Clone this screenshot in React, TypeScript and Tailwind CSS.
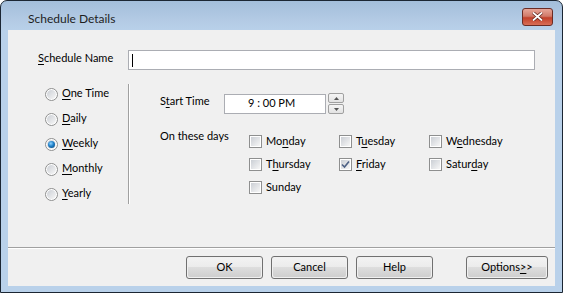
import React from 'react';

const font = "font-['Segoe_UI','Lato','Noto_Sans',sans-serif] text-[11px] text-black";

// Win7-ish radio button glyph
const Radio: React.FC<{ checked?: boolean }> = ({ checked }) => (
  <span className="w-[13px] h-[13px] rounded-full border border-[#8e8f8f] bg-white flex items-center justify-center shrink-0">
    <span className="w-[9px] h-[9px] rounded-full bg-gradient-to-br from-[#cbcfd5] to-[#f7f7f7] flex items-center justify-center">
      {checked && (
        <span className="w-[7px] h-[7px] rounded-full bg-[radial-gradient(circle_at_40%_35%,#8fd3ff_0%,#1f80c8_45%,#0b3f6e_100%)]" />
      )}
    </span>
  </span>
);

const Check: React.FC<{ checked?: boolean }> = ({ checked }) => (
  <span className="w-[13px] h-[13px] border border-[#8e8f8f] bg-white p-[1px] shrink-0 flex">
    <span className="flex-1 bg-gradient-to-br from-[#cbcfd5] to-[#f7f7f7] flex items-center justify-center">
      {checked && (
        <svg width="9" height="9" viewBox="0 0 9 9">
          <path d="M1 4.5 L3.5 7 L8 1.5" stroke="#4d6185" strokeWidth="1.6" fill="none" />
        </svg>
      )}
    </span>
  </span>
);

// label with one underlined access key
const AK: React.FC<{ text: string; at?: number }> = ({ text, at }) => {
  if (at === undefined) return <>{text}</>;
  return (
    <>
      {text.slice(0, at)}
      <span className="underline underline-offset-2">{text[at]}</span>
      {text.slice(at + 1)}
    </>
  );
};

const Btn: React.FC<{ children: React.ReactNode; w?: string }> = ({ children, w = 'w-[77px]' }) => (
  <div className={`${w} h-[23px] rounded-[3px] border border-[#707070] p-px`}>
    <div className="w-full h-full rounded-[2px] bg-[linear-gradient(#f2f2f2_0%,#ebebeb_50%,#dddddd_50%,#cfcfcf_100%)] flex items-center justify-center">
      {children}
    </div>
  </div>
);

const days: [string, number | undefined, boolean][] = [
  ['Monday', 2, false],
  ['Tuesday', 1, false],
  ['Wednesday', 1, false],
  ['Thursday', 1, false],
  ['Friday', 0, true],
  ['Saturday', 5, false],
  ['Sunday', undefined, false],
];

export default function App() {
  return (
    <div className={`w-[563px] h-[293px] rounded-t-[7px] border border-[#1b2633] bg-[linear-gradient(#a3bedb_0px,#b4cbe5_20px,#b9d1ea_30px,#b9d1ea_100%)] flex flex-col ${font}`}>
      {/* title bar */}
      <div className="h-[29px] flex items-center pl-[27px] pr-[9px] shrink-0">
        <span className="text-[12px] text-[#1e1e1e] mt-[6px]">Schedule Details</span>
        <div className="ml-auto w-[31px] h-[18px] mt-[2px] rounded-[3px] border border-[#6b2c25] bg-[linear-gradient(#e7a699_0%,#d17a69_45%,#c2402a_55%,#d86e57_100%)] flex items-center justify-center">
          <svg width="11" height="9" viewBox="0 0 11 9">
            <path d="M1 0.5 L10 8.5 M10 0.5 L1 8.5" stroke="#5b2018" strokeWidth="3.2" />
            <path d="M1 0.5 L10 8.5 M10 0.5 L1 8.5" stroke="#ffffff" strokeWidth="1.8" />
          </svg>
        </div>
      </div>

      {/* client area */}
      <div className="mx-[7px] mb-[6px] flex-1 bg-[#f0f0f0] flex flex-col">
        <div className="flex items-center pt-[20px] pl-[30px]">
          <span className="w-[90px] mt-[-3px]"><AK text="Schedule Name" at={0} /></span>
          <div className="w-[407px] h-[20px] bg-white border border-[#abadb3] flex items-center pl-[3px]">
            <span className="w-px h-[13px] bg-black" />
          </div>
        </div>

        <div className="flex mt-[14px] h-[120px]">
          <div className="w-[120px] pl-[37px] flex flex-col gap-[5px]">
            {([
              ['One Time', 0, false],
              ['Daily', 0, false],
              ['Weekly', 0, true],
              ['Monthly', 0, false],
              ['Yearly', 0, false],
            ] as [string, number, boolean][]).map(([t, a, c]) => (
              <div key={t} className="h-[20px] flex items-center gap-[4px]">
                <Radio checked={c} />
                <span className="mt-[-1px]"><AK text={t} at={a} /></span>
              </div>
            ))}
          </div>
          <div className="w-px bg-[#a0a0a0]" />
          <div className="w-px bg-white" />

          <div className="pl-[30px] pt-[9px] flex flex-col">
            <div className="flex items-center">
              <span className="w-[64px] mt-[-4px]"><AK text="Start Time" at={1} /></span>
              <div className="w-[102px] h-[20px] bg-white border border-[#abadb3] flex items-center pl-[23px]">
                9 : 00 PM
              </div>
              <div className="ml-[2px] w-[16px] h-[21px] flex flex-col gap-px">
                <div className="flex-1 border border-[#a0a0a0] rounded-[2px] bg-[linear-gradient(#f5f5f5,#e2e2e2)] flex items-center justify-center">
                  <svg width="5" height="3" viewBox="0 0 5 3"><path d="M0 3 L2.5 0 L5 3Z" fill="#555" /></svg>
                </div>
                <div className="flex-1 border border-[#a0a0a0] rounded-[2px] bg-[linear-gradient(#f5f5f5,#e2e2e2)] flex items-center justify-center">
                  <svg width="5" height="3" viewBox="0 0 5 3"><path d="M0 0 L2.5 3 L5 0Z" fill="#555" /></svg>
                </div>
              </div>
            </div>

            <div className="flex items-start mt-[16px]">
              <span className="w-[89px] leading-[16px] mt-[-2px]">On these days</span>
              <div className="grid grid-cols-[90px_90px_90px] auto-rows-[23px]">
                {days.map(([d, a, c]) => (
                  <div key={d} className="flex items-center gap-[4px]">
                    <Check checked={c} />
                    <span className="mt-[-1px]"><AK text={d} at={a} /></span>
                  </div>
                ))}
              </div>
            </div>
          </div>
        </div>

        <div className="flex-1" />
        <div className="h-px bg-[#a0a0a0]" />
        <div className="h-px bg-white" />
        <div className="flex items-center pl-[178px] pt-[7px] pb-[7px]">
          <div className="flex gap-[8px]">
            <Btn>OK</Btn>
            <Btn>Cancel</Btn>
            <Btn>Help</Btn>
          </div>
          <div className="ml-[33px]">
            <Btn w="w-[82px]">
              <span>Options<span className="underline underline-offset-2">&gt;</span>&gt;</span>
            </Btn>
          </div>
        </div>
      </div>
    </div>
  );
}
